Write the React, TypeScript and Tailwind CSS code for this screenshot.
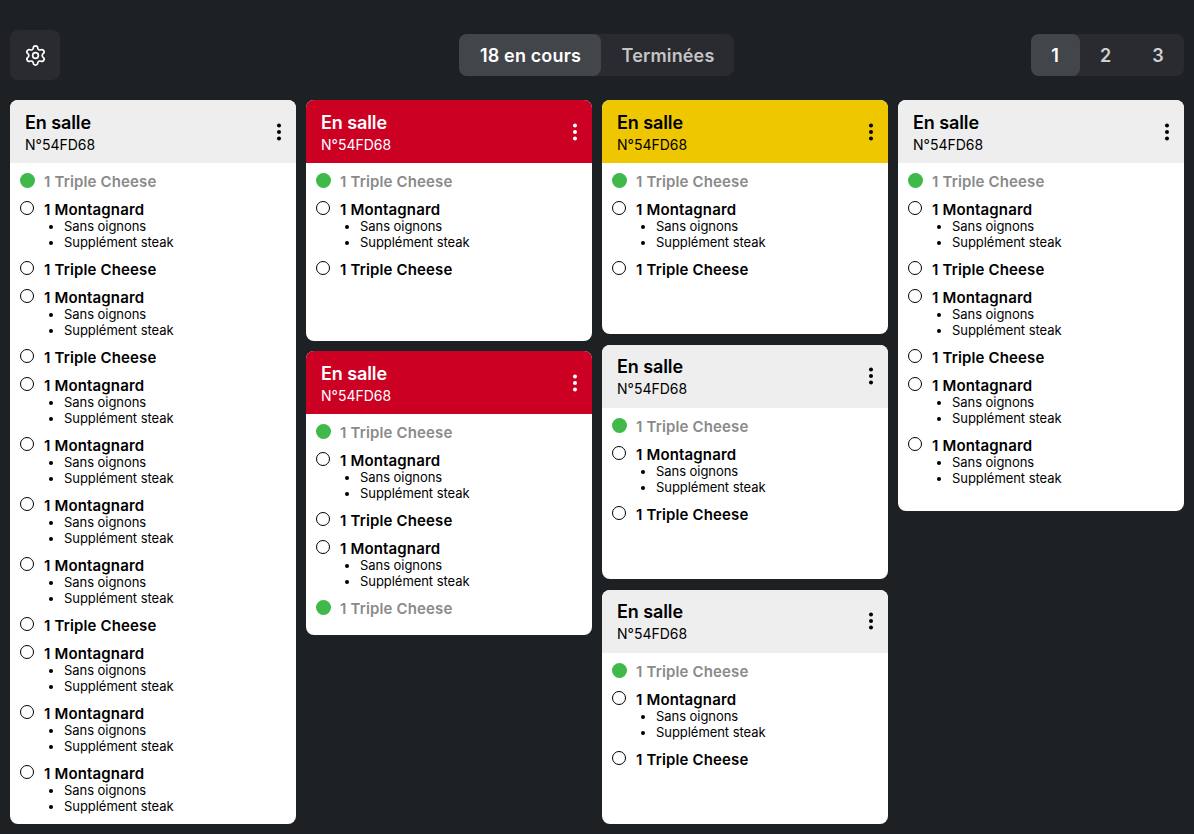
import { Settings } from "lucide-react";

type Tone = "gray" | "red" | "yellow";
type Item = { sub?: boolean; done?: boolean };

const T: Item = {};
const M: Item = { sub: true };
const D: Item = { done: true };

const headerTones: Record<Tone, string> = {
  gray: "bg-[#eeeeee] text-[#000000]",
  red: "bg-[#cc0023] text-white",
  yellow: "bg-[#eec700] text-[#000000]",
};

function Row({ item }: { item: Item }) {
  return (
    <div className="flex items-start gap-[10px] pb-[10px]">
      {item.done ? (
        <span className="-mr-[1px] h-[15px] w-[15px] shrink-0 rounded-full bg-[#3fb94a]" />
      ) : (
        <span className="h-[14px] w-[14px] shrink-0 rounded-full border border-black" />
      )}
      <div className="min-w-0">
        <p
          className={`h-[18px] text-[15px] leading-[18px] font-semibold tracking-[0.15px] ${
            item.done ? "text-[#8a8a8a]" : "text-black"
          }`}
        >
          1 {item.sub ? "Montagnard" : "Triple Cheese"}
        </p>
        {item.sub && (
          <ul className="-mt-[1px] mb-[1px] list-disc pl-[20px] text-[13px] leading-[16px] tracking-[-0.05px] text-black">
            <li>Sans oignons</li>
            <li>Supplément steak</li>
          </ul>
        )}
      </div>
    </div>
  );
}

function Card({
  tone = "gray",
  items,
  className = "",
}: {
  tone?: Tone;
  items: Item[];
  className?: string;
}) {
  return (
    <div className={`flex flex-col overflow-hidden rounded-[8px] bg-white ${className}`}>
      <div className={`flex h-[63px] shrink-0 items-center justify-between pl-[15px] pr-[14px] ${headerTones[tone]}`}>
        <div className="pt-[1px]">
          <p className="text-[18px] leading-[22px] font-semibold tracking-[-0.1px]">En salle</p>
          <p className="mt-[2px] text-[14px] leading-[17px]">N°54FD68</p>
        </div>
        <svg width="6" height="18" viewBox="0 0 6 18" fill="currentColor">
          <circle cx="3" cy="2.5" r="2" />
          <circle cx="3" cy="9" r="2" />
          <circle cx="3" cy="15.5" r="2" />
        </svg>
      </div>
      <div className="px-[10px] pt-[10px]">
        {items.map((item, i) => (
          <Row key={i} item={item} />
        ))}
      </div>
    </div>
  );
}

export default function App() {
  return (
    <div className="h-[834px] w-[1194px] overflow-hidden bg-[#1e2124] px-[10px] font-['Inter',sans-serif]">
      <div className="grid h-[100px] grid-cols-3 items-start pt-[30px]">
        <button className="flex h-[50px] w-[50px] items-center justify-center rounded-[8px] bg-[#2a2b30] text-white">
          <Settings size={23} strokeWidth={1.75} />
        </button>
        <div className="mt-[4px] flex h-[42px] justify-self-center rounded-[8px] bg-[#2a2b30] text-[18px] font-semibold tracking-[0.15px]">
          <div className="flex w-[142px] items-center justify-center rounded-[8px] bg-[#42454a] text-white">18 en cours</div>
          <div className="flex w-[133px] items-center justify-center text-[#c4c4c4]">Terminées</div>
        </div>
        <div className="mt-[4px] flex h-[42px] w-[153px] justify-self-end rounded-[8px] bg-[#2a2b30] text-[18px] font-semibold">
          <div className="flex w-[49px] items-center justify-center rounded-[8px] bg-[#42454a] pr-[1px] text-white">1</div>
          <div className="flex w-[52px] items-center justify-center pr-[1px] text-[#d0d0d0]">2</div>
          <div className="flex w-[52px] items-center justify-center text-[#d0d0d0]">3</div>
        </div>
      </div>
      <div className="grid h-[724px] grid-cols-4 gap-[10px]">
        <Card items={[D, M, T, M, T, M, M, M, M, T, M, M, M]} />
        <div className="flex flex-col gap-[10px]">
          <Card tone="red" items={[D, M, T]} className="h-[241px]" />
          <Card tone="red" items={[D, M, T, M, D]} className="h-[284px]" />
        </div>
        <div className="flex flex-col gap-[10.5px]">
          <Card tone="yellow" items={[D, M, T]} className="flex-1" />
          <Card items={[D, M, T]} className="flex-1" />
          <Card items={[D, M, T]} className="flex-1" />
        </div>
        <div>
          <Card items={[D, M, T, M, T, M, M]} className="h-[411px]" />
        </div>
      </div>
    </div>
  );
}
